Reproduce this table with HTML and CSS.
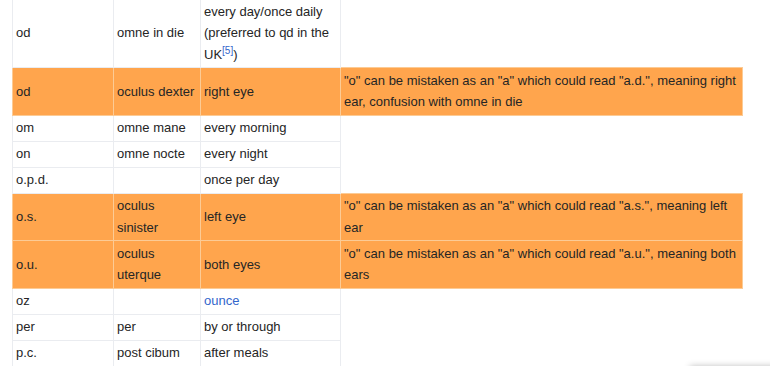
FILE: index.html
```html
<!DOCTYPE html>
<html lang="en">
<head>
<meta charset="utf-8">
<title>Abbreviations</title>
<link rel="stylesheet" href="styles.css">
</head>
<body>
<div class="page">
<table class="wikitable">
<colgroup>
<col class="c1"><col class="c2"><col class="c3"><col class="c4">
</colgroup>
<tbody>
<tr><td>od</td><td>omne in die</td><td>every day/once daily (preferred to qd in the UK<sup class="ref"><a href="#">[5]</a></sup>)</td></tr>
<tr class="warn"><td>od</td><td>oculus dexter</td><td>right eye</td><td>"o" can be mistaken as an "a" which could read "a.d.", meaning right ear, confusion with omne in die</td></tr>
<tr><td>om</td><td>omne mane</td><td>every morning</td></tr>
<tr><td>on</td><td>omne nocte</td><td>every night</td></tr>
<tr><td>o.p.d.</td><td></td><td>once per day</td></tr>
<tr class="warn"><td>o.s.</td><td>oculus sinister</td><td>left eye</td><td>"o" can be mistaken as an "a" which could read "a.s.", meaning left ear</td></tr>
<tr class="warn"><td>o.u.</td><td>oculus uterque</td><td>both eyes</td><td>"o" can be mistaken as an "a" which could read "a.u.", meaning both ears</td></tr>
<tr><td>oz</td><td></td><td><a href="#" class="link">ounce</a></td></tr>
<tr><td>per</td><td>per</td><td>by or through</td></tr>
<tr><td>p.c.</td><td>post cibum</td><td>after meals</td></tr>
</tbody>
</table>
</div>
<div class="floater"></div>
</body>
</html>
```
FILE: styles.css
```css
html, body {
  margin: 0;
  padding: 0;
  background: #fff;
  overflow: hidden;
}
body {
  font-family: "Liberation Sans", Arial, sans-serif;
  font-size: 13px;
  color: #252525;
}
.page {
  padding-left: 12px;
  margin-top: -2px;
}
.wikitable {
  border-collapse: collapse;
  table-layout: fixed;
  width: 730px;
}
.c1 { width: 101px; }
.c2 { width: 87px; }
.c3 { width: 140px; }
.c4 { width: 402px; }
.wikitable td {
  border: 1px solid #eaecf0;
  padding: 1.75px 3px;
  line-height: 21.5px;
  vertical-align: middle;
  text-align: left;
}
.wikitable tr.warn td {
  background: #ffa54d;
  border-color: #fccb95;
}
.ref {
  font-size: 10px;
  line-height: 0;
  vertical-align: super;
}
.ref a, .link {
  color: #3366cc;
  text-decoration: none;
}
.floater {
  position: fixed;
  left: 690px;
  top: 366px;
  width: 120px;
  height: 20px;
  background: #fff;
  box-shadow: 0 0 6px rgba(0,0,0,0.25);
}
```
